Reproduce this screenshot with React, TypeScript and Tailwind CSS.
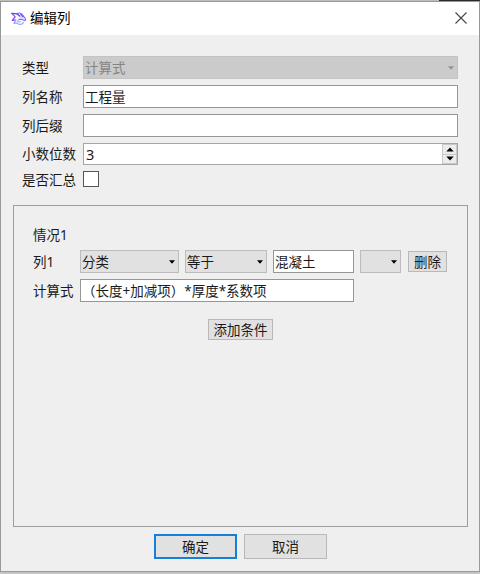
import type { ReactNode } from "react";

function Logo() {
  return (
    <svg width="16" height="14" viewBox="0 0 16 14" fill="none" strokeLinejoin="round" strokeLinecap="round">
      <path d="M5.8 1.8 C8.2 0.4 11 1 12 3.4 L14.6 7 L14 8.8 L11 7.4 L8.2 7.4" stroke="#7670f4" strokeWidth="1.1" fill="#eee9ff" />
      <path d="M0.8 1.4 L5.8 1.8 L9 4.2" stroke="#6d3bf0" strokeWidth="1.2" />
      <path d="M0.8 1.4 L4.2 4.8 L1.2 8.4 L4.8 8" stroke="#8240ee" strokeWidth="1.1" />
      <path d="M4.8 8 L3 11.4 L6 11 C7.6 13 10.8 13 12.4 10.6" stroke="#86a8fb" strokeWidth="1.2" />
      <path d="M7.2 7.8 L6.6 10 L9.8 9.8" stroke="#8f95f8" strokeWidth="0.9" />
      <path d="M9.8 2.4 L12 5" stroke="#5b45ea" strokeWidth="1.1" />
    </svg>
  );
}

function Arrow({ color = "#000" }: { color?: string }) {
  return (
    <svg width="6" height="4" viewBox="0 0 6 4" className="shrink-0">
      <path d="M0 0.3 H6 L3 3.7 Z" fill={color} />
    </svg>
  );
}

function Field({ label, className, children }: { label: string; className: string; children: ReactNode }) {
  return (
    <div className={`flex items-center ${className}`}>
      <span className="w-[61px] shrink-0">{label}</span>
      {children}
    </div>
  );
}

function TextBox({ value = "", className }: { value?: string; className: string }) {
  return (
    <div className={`flex h-[23px] shrink-0 items-center border border-[#969696] bg-white pl-px ${className}`}>
      {value}
    </div>
  );
}

function Select({ value = "", className }: { value?: string; className: string }) {
  return (
    <div className={`flex h-[23px] shrink-0 items-center justify-between border border-[#bcbcbc] bg-[#e1e1e1] pl-px pr-[3px] ${className}`}>
      <span>{value}</span>
      <Arrow />
    </div>
  );
}

function Button({ children, className }: { children: ReactNode; className: string }) {
  return (
    <button type="button" className={`flex shrink-0 items-center justify-center bg-[#e1e1e1] ${className}`}>
      {children}
    </button>
  );
}

export default function App() {
  return (
    <div className="flex h-[574px] w-[480px] flex-col bg-[#c4c4c4] font-['Noto_Sans','Noto_Sans_CJK_SC',sans-serif] text-[13.5px] leading-[18px] text-[#1a1a1a]">
      <div className="flex h-px shrink-0 justify-end bg-[#bdbdbd]">
        <span className="w-[41px] bg-[#2a2a2a]" />
      </div>
      <div className="flex h-[571px] flex-col border border-[#999] bg-[#efefef]">
        <header className="flex h-[33px] shrink-0 items-center bg-white pl-[10px] pr-[12px]">
          <Logo />
          <span className="-mt-px ml-[3px] text-black">编辑列</span>
          <svg className="-mt-px ml-auto" width="12" height="12" viewBox="0 0 12 12">
            <path d="M0.5 0.5 L11.5 11.5 M11.5 0.5 L0.5 11.5" stroke="#444" strokeWidth="1.1" />
          </svg>
        </header>

        <div className="flex flex-col pl-[21px] pt-[21px]">
          <Field label="类型" className="h-[23px]">
            <div className="flex h-[23px] w-[375px] items-center justify-between border border-[#c3c3c3] bg-[#cbcbcb] pl-px pr-[3px] text-[#858585]">
              <span>计算式</span>
              <Arrow color="#929292" />
            </div>
          </Field>
          <Field label="列名称" className="mt-[6px] h-[23px]">
            <TextBox value="工程量" className="w-[375px]" />
          </Field>
          <Field label="列后缀" className="mt-[6px] h-[23px]">
            <TextBox className="w-[375px]" />
          </Field>
          <Field label="小数位数" className="mt-[6px] h-[22px]">
            <div className="flex h-[22px] w-[375px] items-center justify-between border border-[#a5a5a5] bg-white pl-[2px]">
              <span className="text-[14.5px]">3</span>
              <div className="flex h-[20px] w-[15px] flex-col border border-[#c8c8c8] bg-[#ececec]">
                <span className="flex flex-1 items-center justify-center border-b border-[#c8c8c8]">
                  <svg width="8" height="5" viewBox="0 0 8 5">
                    <path d="M0.3 4.5 H7.7 L4 0.5 Z" fill="#000" />
                  </svg>
                </span>
                <span className="flex flex-1 items-center justify-center">
                  <svg width="8" height="5" viewBox="0 0 8 5">
                    <path d="M0.3 0.5 H7.7 L4 4.5 Z" fill="#000" />
                  </svg>
                </span>
              </div>
            </div>
          </Field>
          <Field label="是否汇总" className="mt-[6px] h-[18px]">
            <span className="mb-[2px] h-[16px] w-[16px] border border-[#555] bg-white" />
          </Field>
        </div>

        <section className="ml-[12px] mt-[16px] h-[322px] w-[455px] shrink-0 border border-[#9b9da3] pl-[19px]">
          <div className="mt-[20px] h-[18px]">情况1</div>
          <div className="mt-[6px] flex h-[23px] items-center">
            <span className="w-[47px] shrink-0">列1</span>
            <Select value="分类" className="w-[99px]" />
            <Select value="等于" className="ml-[6px] w-[82px]" />
            <TextBox value="混凝土" className="ml-[6px] w-[81px]" />
            <Select className="ml-[6px] w-[41px]" />
            <Button className="ml-[7px] h-[21px] w-[39px] border border-[#b8b8b8]">删除</Button>
          </div>
          <div className="mt-[6px] flex h-[23px] items-center">
            <span className="w-[47px] shrink-0">计算式</span>
            <TextBox value="（长度+加减项）*厚度*系数项" className="w-[274px]" />
          </div>
          <Button className="ml-[175px] mt-[17px] h-[21px] w-[65px] border border-[#b8b8b8]">添加条件</Button>
        </section>

        <footer className="ml-[153px] mt-[7px] flex gap-[7px]">
          <Button className="h-[25px] w-[83px] border-2 border-[#1580d8]">确定</Button>
          <Button className="h-[25px] w-[83px] border border-[#b8b8b8]">取消</Button>
        </footer>
      </div>
    </div>
  );
}
